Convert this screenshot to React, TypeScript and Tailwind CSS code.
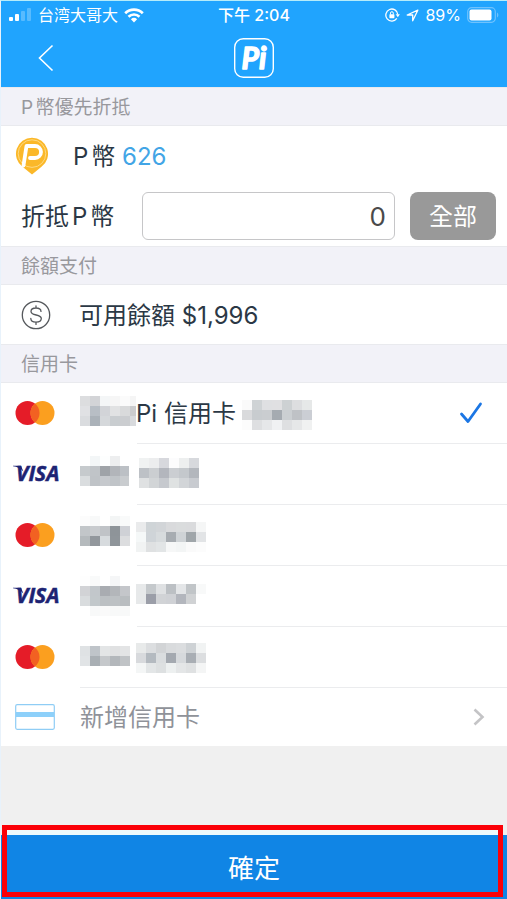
import React, { useState } from "react";

type Pixels = {
  width: number;
  top: number;
  rows: string[][];
};

type Card = {
  id: string;
  brand: "mastercard" | "visa";
  first: Pixels;
  label?: string;
  second: Pixels;
  gap: string;
  divider: string;
};

const CELL = 10;

// Bank names and card numbers are masked, only the pixel blocks are kept
const cards: Card[] = [
  {
    id: "card-1",
    brand: "mastercard",
    first: {
      width: 56,
      top: 13,
      rows: [
        ["#dcdddf", "#d3d4d7", "#f4f6f7", "#f6f6f6", "#fbfbfb", "#f5f5f5"],
        ["#e0e1e4", "#b8bec5", "#d2d4d8", "#e1e2e3", "#d9dadb", "#cbccce"],
        ["#dadcdf", "#abb2b9", "#d5d8db", "#c9cdd0", "#cbcdd0", "#d8dadd"],
      ],
    },
    label: "Pi 信用卡",
    second: {
      width: 70,
      top: 17,
      rows: [
        ["#fafafa", "#cfd3d5", "#dfe0e2", "#e0e0e2", "#cdd1d3", "#dddee0", "#e6e8e8"],
        ["#d9dadc", "#c8cccf", "#cacdd0", "#a5abb1", "#cbcfd2", "#bfc2c6", "#cbced4"],
        ["#fcfcfc", "#dedfe1", "#e6e7e9", "#f0f1f3", "#dedfe1", "#e6e7e8", "#f0f1f1"],
      ],
    },
    gap: "ml-[6px]",
    divider: "ml-[136px]",
  },
  {
    id: "card-2",
    brand: "visa",
    first: {
      width: 49,
      top: 12,
      rows: [
        ["#ffffff", "#f3f6f7", "#fdfefe", "#edeeef", "#ffffff"],
        ["#c6cacd", "#c0c4c8", "#9fa3a8", "#b2b5ba", "#bcc0c5"],
        ["#dadddf", "#bfc3c7", "#c6c9cd", "#c0c4c8", "#c9cccf"],
      ],
    },
    second: {
      width: 60,
      top: 14,
      rows: [
        ["#f0f2f2", "#ecedee", "#d7d8dd", "#fcfcfd", "#edefef", "#d7d9dd"],
        ["#bdc1c6", "#cbced1", "#b3b6bd", "#cbced2", "#c4c8cc", "#b3b7bd"],
        ["#dfe1e2", "#d2d5d7", "#c6c9ce", "#dfe2e2", "#d2d5d8", "#c8cbd0"],
      ],
    },
    gap: "ml-[10px]",
    divider: "ml-[136px]",
  },
  {
    id: "card-3",
    brand: "mastercard",
    first: {
      width: 50,
      top: 11,
      rows: [
        ["#fcfcfc", "#f8f9f9", "#ffffff", "#f3f5f5", "#f9fafa"],
        ["#c2c6c9", "#c8cbce", "#c0c3c7", "#8e9499", "#cfd1d6"],
        ["#b5babd", "#92979c", "#d7dbde", "#8f959a", "#dcdddf"],
      ],
    },
    second: {
      width: 70,
      top: 17,
      rows: [
        ["#eaebec", "#cfd4d7", "#d2d5d8", "#d9dadc", "#dadcdd", "#dadbdd", "#f5f6f6"],
        ["#f5f8f8", "#cfd4d8", "#d7dbdd", "#a7acb1", "#cfd3d6", "#a0a6aa", "#e2e4e6"],
        ["#f1f3f3", "#dfe1e2", "#e2e5e6", "#f6f7f7", "#f3f5f5", "#fafafa", "#fcfcfc"],
      ],
    },
    gap: "ml-[6px]",
    divider: "ml-[136px]",
  },
  {
    id: "card-4",
    brand: "visa",
    first: {
      width: 50,
      top: 10,
      rows: [
        ["#fefefe", "#f9fafa", "#ffffff", "#f5f6f7", "#ffffff"],
        ["#d2d3d6", "#c2c7cb", "#a9acb1", "#b3b6ba", "#c4c6ca"],
        ["#d9dcde", "#c2c8cb", "#bcc0c3", "#bdc1c4", "#b9bdc0"],
        ["#ffffff", "#f8f9f9", "#fafafa", "#f8f9f9", "#f8f9f9"],
      ],
    },
    second: {
      width: 70,
      top: 18,
      rows: [
        ["#e7e9ea", "#c5c9cc", "#dfe1e3", "#bcc0c4", "#e4e6e8", "#c1c5c8", "#f8f9f9"],
        ["#e7e9ea", "#9b9ea8", "#d1d3d6", "#cfd1d5", "#b3b6bd", "#d0d2d4", "#ffffff"],
      ],
    },
    gap: "ml-[6px]",
    divider: "ml-[136px]",
  },
  {
    id: "card-5",
    brand: "mastercard",
    first: {
      width: 50,
      top: 19,
      rows: [
        ["#dfe2e4", "#bfc4c9", "#e3e5e6", "#e0e1e2", "#e3e4e5"],
        ["#e1e4e6", "#a9afb4", "#c5c8cb", "#b3b7bb", "#c0c3c6"],
      ],
    },
    second: {
      width: 70,
      top: 16,
      rows: [
        ["#e8eaea", "#dcdee0", "#d2d4d6", "#d9dbdd", "#dbdddf", "#ced2d5", "#f1f3f3"],
        ["#d8dadd", "#b4bac0", "#dadddf", "#a4a9b0", "#d6d9dc", "#a9aeb4", "#dcdee0"],
        ["#f4f6f6", "#e3e6e7", "#dde0e1", "#edf0f0", "#e4e6e7", "#dfe1e2", "#f4f5f5"],
      ],
    },
    gap: "ml-[6px]",
    divider: "ml-[79px]",
  },
];

function Mosaic({ width, top, rows }: Pixels) {
  return (
    <svg width={width} height={60} viewBox={`0 0 ${width} 60`} shapeRendering="crispEdges" className="shrink-0" aria-hidden="true">
      {rows.map((row, y) =>
        row.map((fill, x) => (
          <rect key={`${x}-${y}`} x={x * CELL} y={top + y * CELL} width={CELL} height={CELL} fill={fill} />
        ))
      )}
    </svg>
  );
}

function SignalIcon() {
  return (
    <svg width="23" height="14" viewBox="0 0 23 14" fill="#fff" aria-hidden="true">
      <rect x="0" y="9" width="4" height="4" rx="1" />
      <rect x="6" y="6" width="4" height="7" rx="1" />
      <rect x="12" y="3" width="4" height="10" rx="1" opacity="0.25" />
      <rect x="18" y="0" width="4" height="13" rx="1" opacity="0.25" />
    </svg>
  );
}

function WifiIcon() {
  return (
    <svg width="20" height="15" viewBox="0 0 20 15" fill="none" stroke="#fff" aria-hidden="true">
      <path d="M1.2 5.2a12.6 12.6 0 0 1 17.6 0" strokeWidth="2.7" />
      <path d="M4.5 8.8a7.9 7.9 0 0 1 11 0" strokeWidth="2.6" />
      <path d="M10 14.4 6.9 11.2a4.5 4.5 0 0 1 6.2 0z" fill="#fff" stroke="none" />
    </svg>
  );
}

function RotationLockIcon() {
  return (
    <svg width="15" height="14" viewBox="0 0 15 14" fill="none" stroke="#fff" aria-hidden="true">
      <path d="M11.8 10.400A6 6 0 1 1 12.800 6.500" strokeWidth="1.3" />
      <path d="M10.7 6.2h4.2l-2.1 3z" fill="#fff" stroke="none" />
      <rect x="4.4" y="6.2" width="5" height="4" rx="0.6" fill="#fff" stroke="none" />
      <path d="M5.5 6.5V5.1a1.4 1.4 0 0 1 2.8 0v1.4" strokeWidth="1" />
    </svg>
  );
}

function LocationIcon() {
  return (
    <svg width="13" height="13" viewBox="0 0 13 13" fill="none" stroke="#fff" strokeWidth="1.3" strokeLinejoin="round" aria-hidden="true">
      <path d="M11.8 1.2 1.2 6h5.5v5.8z" />
    </svg>
  );
}

function BatteryIcon() {
  return (
    <svg width="32" height="16" viewBox="0 0 32 16" fill="none" aria-hidden="true">
      <rect x="0.7" y="0.7" width="27.6" height="14.6" rx="4" stroke="#6fc2fd" strokeWidth="1.2" />
      <rect x="2.5" y="2.5" width="22" height="11" rx="2" fill="#fff" />
      <path d="M30 5.5c1.8.8 1.8 4.2 0 5z" fill="#6fc2fd" />
    </svg>
  );
}

function PiLogo() {
  return (
    <svg width="42" height="42" viewBox="0 0 42 42" role="img" aria-label="Pi" className="col-start-2">
      <rect x="1.7" y="1.7" width="38.6" height="38.6" rx="8.5" fill="none" stroke="#fff" strokeWidth="1.4" />
      <text x="21" y="31.5" textAnchor="middle" fill="#fff" stroke="#fff" strokeWidth="1.4" strokeLinejoin="round" fontFamily="Lato, sans-serif" fontSize="30" fontWeight="700" fontStyle="italic">
        Pi
      </text>
    </svg>
  );
}

function CoinIcon() {
  return (
    <svg width="34" height="38" viewBox="0 0 34 38" aria-hidden="true">
      <path d="M17 .8a16 16 0 0 0-9.5 28.9L17 37.5l9.5-7.8A16 16 0 0 0 17 .8z" fill="#fbb829" />
      <circle cx="17" cy="16.6" r="13.8" fill="none" stroke="#fddc8c" strokeWidth="0.9" />
      <path d="M8.5 28.5 11.5 9H20a6 6 0 0 1 0 12h-5" fill="none" stroke="#fff" strokeWidth="3.8" strokeLinecap="round" strokeLinejoin="round" />
    </svg>
  );
}

function DollarIcon() {
  return (
    <svg width="30" height="30" viewBox="0 0 30 30" fill="none" stroke="#55585c" strokeWidth="1.3" strokeLinecap="round" aria-hidden="true">
      <circle cx="15" cy="15" r="13.7" />
      <path d="M20 11.4c0-2.2-2-3.4-5-3.4s-5 1.3-5 3.5c0 4.7 10.3 2.3 10.3 7 0 2.3-2.2 3.6-5.3 3.6s-5.2-1.3-5.2-3.6M15 5.8V8M15 22.1v2.3" />
    </svg>
  );
}

function MastercardIcon() {
  return (
    <svg width="40" height="26" viewBox="0 0 40 26" role="img" aria-label="Mastercard">
      <circle cx="12.5" cy="13" r="12" fill="#e51c28" />
      <circle cx="27.5" cy="13" r="12" fill="#fb9f1f" />
      <path d="M20 3.6a12 12 0 0 1 0 18.8 12 12 0 0 1 0-18.8z" fill="#f26122" />
    </svg>
  );
}

function VisaIcon() {
  return (
    <svg width="54" height="28" viewBox="0 0 54 28" role="img" aria-label="Visa">
      <path d="M0 5.8h8l2.5 6C8 8.300 4 6.800 0 6.300z" fill="#1d2373" />
      <text x="3" y="21" fill="#1d2373" stroke="#1d2373" strokeWidth="0.5" fontFamily="'Open Sans', sans-serif" fontSize="21" fontWeight="700" fontStyle="italic">
        VISA
      </text>
    </svg>
  );
}

function NewCardIcon() {
  return (
    <svg width="40" height="26" viewBox="0 0 40 26" fill="none" aria-hidden="true">
      <rect x="0.7" y="0.7" width="38.6" height="24.6" rx="1.5" stroke="#8fcdf5" strokeWidth="1.2" />
      <rect x="1" y="8" width="38" height="5" fill="#8dd0fa" />
    </svg>
  );
}

function SectionTitle({ children }: { children: React.ReactNode }) {
  return (
    <h2 className="flex h-[39px] items-center border-y border-[#e9eaee] bg-[#f2f2f8] pl-5 pt-[2px] text-[19px] leading-6 text-[#98989d]">
      {children}
    </h2>
  );
}

export default function App() {
  const [amount, setAmount] = useState("0");
  const [selected, setSelected] = useState("card-1");

  return (
    <div className="flex min-h-screen flex-col border-l border-t border-l-[#e8f2fb] border-t-[#b5ecfa] bg-[#f0f0f0] font-[Inter,'Noto_Sans_CJK_TC',sans-serif] font-normal text-[#2b3845] [text-autospace:normal]">
      <header className="bg-[#20a4fe] text-white">
        {/* Phone status bar */}
        <div className="grid h-7 grid-cols-[1fr_auto_1fr] items-center pl-2 pr-2 text-base leading-5">
          <div className="flex items-center gap-[6px]">
            <SignalIcon />
            <span>台湾大哥大</span>
            <WifiIcon />
          </div>
          <span className="font-medium">下午 2:04</span>
          <div className="flex items-center justify-end gap-[6px]">
            <RotationLockIcon />
            <LocationIcon />
            <span>89%</span>
            <BatteryIcon />
          </div>
        </div>

        <div className="grid h-[58px] grid-cols-[1fr_auto_1fr] items-center">
          <button type="button" aria-label="返回" className="ml-9 w-5">
            <svg width="18" height="28" viewBox="0 0 18 28" fill="none" stroke="#fff" strokeWidth="1.6" aria-hidden="true">
              <path d="M15.5 1.5 2.5 14l13 12.5" />
            </svg>
          </button>
          <PiLogo />
        </div>
      </header>

      <main className="text-2xl">
        <SectionTitle>P幣優先折抵</SectionTitle>
        <section className="h-[120px] bg-white">
          <div className="flex h-[60px] items-center gap-6 pl-[14px]">
            <CoinIcon />
            <p className="pt-[2px]">
              P幣 <span className="text-[#42a5e6]">626</span>
            </p>
          </div>
          <div className="flex h-[60px] items-center pl-5 pr-[11px]">
            <label htmlFor="p-coin" className="w-[121px] shrink-0 pt-[2px]">
              折抵P幣
            </label>
            <input
              id="p-coin"
              inputMode="numeric"
              value={amount}
              onChange={(e) => setAmount(e.target.value)}
              className="h-12 min-w-0 flex-1 rounded-md border border-[#c6c6c8] bg-white px-2 text-right text-[26px] text-[#4a4a4a]"
            />
            <button
              type="button"
              onClick={() => setAmount("626")}
              className="ml-[15px] h-12 w-[86px] rounded-lg bg-[#999999] pt-[2px] text-white"
            >
              全部
            </button>
          </div>
        </section>

        <SectionTitle>餘額支付</SectionTitle>
        <section className="flex h-[59px] items-center bg-white pl-5">
          <DollarIcon />
          <p className="ml-7 pt-[2px]">可用餘額 $1,996</p>
        </section>

        <SectionTitle>信用卡</SectionTitle>
        <ul className="bg-white">
          {cards.map((card) => (
            <li key={card.id}>
              <button
                type="button"
                aria-pressed={selected === card.id}
                onClick={() => setSelected(card.id)}
                className="flex h-[60px] w-full items-center pr-6 text-left"
              >
                <span className="flex w-[79px] shrink-0 pl-3">
                  {card.brand === "visa" ? (
                    <VisaIcon />
                  ) : (
                    <span className="pl-[2px]">
                      <MastercardIcon />
                    </span>
                  )}
                </span>
                <Mosaic {...card.first} />
                {card.label && <span className="pt-[2px]">{card.label}</span>}
                <span className={card.gap}>
                  <Mosaic {...card.second} />
                </span>
                {selected === card.id && (
                  <svg width="24" height="22" viewBox="0 0 24 22" fill="none" stroke="#1b76e4" strokeWidth="2.8" strokeLinecap="round" strokeLinejoin="round" className="ml-auto" aria-hidden="true">
                    <path d="M2.5 12 9 19.5 21.5 2" />
                  </svg>
                )}
              </button>
              <div className={`h-px bg-[#ebecee] ${card.divider}`} />
            </li>
          ))}
          <li>
            <button type="button" className="flex h-[58px] w-full items-center pl-[14px] pr-[22px] text-left text-[#8f9299]">
              <NewCardIcon />
              <span className="ml-[25px] pt-[2px]">新增信用卡</span>
              <svg width="12" height="18" viewBox="0 0 12 18" fill="none" stroke="#c4c4c6" strokeWidth="2.6" className="ml-auto" aria-hidden="true">
                <path d="M1.5 1.5 9.500 9l-8 7.5" />
              </svg>
            </button>
          </li>
        </ul>
      </main>

      <footer className="relative mt-auto">
        <button type="button" className="block h-16 w-full bg-[#1085e5] pt-[2px] text-[26px] text-white">
          確定
        </button>
        {/* Callout frame round the confirm button */}
        <div className="pointer-events-none absolute -top-[10px] bottom-[2px] left-px right-1 border-[5px] border-[#fb0007]">
          <div className="h-[5px] bg-[#eefafc]" />
        </div>
      </footer>
    </div>
  );
}
